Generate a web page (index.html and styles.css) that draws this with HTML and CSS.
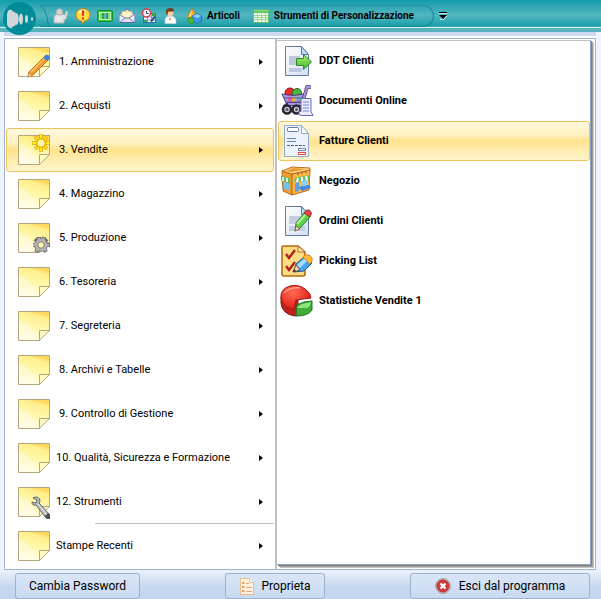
FILE: index.html
```html
<!DOCTYPE html>
<html lang="it">
<head>
  <meta charset="UTF-8" />
  <meta name="viewport" content="width=device-width, initial-scale=1.0"/>
  <title>Menu Vendite</title>
  <link rel="stylesheet" href="styles.css">
</head>
<body>

<!-- Shared gradients and the note icon -->
<svg class="defs" aria-hidden="true">
  <defs>
    <linearGradient id="paper" x1="0.2" y1="1" x2="0.5" y2="0">
      <stop offset="0" stop-color="#fffde2"/>
      <stop offset="0.65" stop-color="#fff5a0"/>
      <stop offset="0.9" stop-color="#ffef8c"/>
      <stop offset="1" stop-color="#ffd75c"/>
    </linearGradient>
    <linearGradient id="sheet" x1="0" y1="0" x2="1" y2="1">
      <stop offset="0" stop-color="#ffffff"/>
      <stop offset="1" stop-color="#d3def4"/>
    </linearGradient>
    <linearGradient id="green" x1="0" y1="0" x2="0" y2="1">
      <stop offset="0" stop-color="#b4f56a"/>
      <stop offset="1" stop-color="#35b52a"/>
    </linearGradient>
    <radialGradient id="red" cx="0.4" cy="0.3" r="0.7">
      <stop offset="0" stop-color="#ff6a52"/>
      <stop offset="1" stop-color="#dd1a14"/>
    </radialGradient>
    <symbol id="note" viewBox="0 0 32 30">
      <path d="M.5.5h31v19l-10 10H.5z" fill="url(#paper)" stroke="#b5a67c"/>
      <path d="M1 8Q14 14 20 29H1z" fill="#fff" opacity=".35"/>
      <path d="M21.500 29.500v-10h10z" fill="#fffbc4" stroke="#b5a67c"/>
    </symbol>
  </defs>
</svg>

<header class="topbar">
  <button class="logo" aria-label="Menu principale">
    <svg width="33" height="33" viewBox="0 0 33 33">
      <circle cx="16.500" cy="16.500" r="16.500" fill="#008b98"/>
      <g fill="#d2d6d9">
        <path d="M4 12q1-5 4-4 2 0 2 2 2-1 3 2v10q-1 3-3 2-1 3-3 2-3-1-3-5z"/>
        <ellipse cx="13.500" cy="17" rx="2.200" ry="6"/>
        <ellipse cx="18" cy="17" rx="2" ry="5.500"/>
        <ellipse cx="23.500" cy="17" rx="1.500" ry="4"/>
        <ellipse cx="29" cy="17" rx="1" ry="2"/>
      </g>
    </svg>
  </button>

  <div class="quickbar">
    <svg class="quickbar-edge" width="9" height="22" viewBox="0 0 9 22"><path d="M0 .5Q7 4 8.500 22" fill="none" stroke="#128c98"/></svg>
    <button class="tool" aria-label="Utente non attivo">
      <svg width="16" height="16" viewBox="0 0 16 16">
        <path d="M1 15V9q1-3 4-3h4l3 1 1-4 2 1-2 7-2 1v3z" fill="#e2e2e2" stroke="#b4b4b4"/>
        <circle cx="6.500" cy="4" r="3.200" fill="#d4d4d4" stroke="#b0b0b0"/>
        <path d="M4 9l2 3 3-3" fill="none" stroke="#f8f8f8"/>
      </svg>
    </button>
    <button class="tool" aria-label="Avvisi">
      <svg width="16" height="16" viewBox="0 0 16 16">
        <path d="M8 .8c4 0 7 2.500 7 6s-3 6-5 6L7 15.500 6.500 13C3 12.500 1 10 1 7c0-3.500 3-6.200 7-6.200z" fill="#ffdb48" stroke="#d67b08"/>
        <path d="M4 3q4-3 8 0-4 0-8 3z" fill="#fff8c0"/>
        <path d="M6.800 2.500h2.400L8.700 8H7.300zM7 9.500h2v2H7z" fill="#d42a12"/>
      </svg>
    </button>
    <button class="tool" aria-label="Pausa">
      <svg width="16" height="16" viewBox="0 0 16 16">
        <rect x=".5" y="2.500" width="15" height="11" rx="1" fill="#35c43c" stroke="#129225"/>
        <rect x="2.500" y="4.500" width="11" height="7" fill="#77e36d" stroke="#c5f7b8"/>
        <path d="M5.500 5.500h1.500v5H5.500zM9 5.500h1.500v5H9z" fill="#3b9ed8" stroke="#167d59" stroke-width=".6"/>
      </svg>
    </button>
    <button class="tool" aria-label="Posta">
      <svg width="16" height="16" viewBox="0 0 16 16">
        <path d="M.5 6L8 1l7.500 5v8.500H.5z" fill="#dbe1fa" stroke="#62679f"/>
        <path d="M3 3.500h10V9l-5 2-5-2z" fill="#fff3bf" stroke="#e1c988" stroke-width=".6"/>
        <path d="M.5 6.500L6 10l-5.500 4.500M15.500 6.500L10 10l5.500 4.500M6 10h4" fill="#eef1ff" stroke="#62679f" stroke-width=".8"/>
      </svg>
    </button>
    <button class="tool" aria-label="Agenda">
      <svg width="16" height="16" viewBox="0 0 16 16">
        <rect x="2.500" y="5.500" width="12" height="9" fill="#fff" stroke="#3767b5"/>
        <path d="M3 9h11M3 12h11M6.500 6v8M10.500 6v8" stroke="#7199d2"/>
        <path d="M11 5h3v3h-3zM3 12h3v2H3z" fill="#3ba84a"/>
        <circle cx="5.500" cy="5" r="4" fill="#f5f8ff" stroke="#d83a45" stroke-width="1.500"/>
        <path d="M5.500 3v2.500h2" fill="none" stroke="#345"/>
        <path d="M9 13l4-5 2 1-4 5z" fill="#385083"/>
      </svg>
    </button>
    <button class="tool" aria-label="Clienti">
      <svg width="16" height="16" viewBox="0 0 16 16">
        <path d="M2 15.500V11q1-3 5-3 5 0 6 4v3.500z" fill="#fff" stroke="#c5ccd2" stroke-width=".6"/>
        <circle cx="7" cy="5" r="3.300" fill="#fbd0a2"/>
        <path d="M3 6V3q1-3 4-3 4 0 4 3-3 1-6 .5L4.500 7z" fill="#703c1c"/>
        <path d="M7 8.500l-.7 3 .7 1 .7-1z" fill="#dc5636"/>
      </svg>
    </button>
    <button class="tool tool-wide">
      <svg width="16" height="16" viewBox="0 0 16 16">
        <path d="M6 .5L1 9q5 3 10 0z" fill="#ffac27" stroke="#c97512" stroke-width=".7"/>
        <path d="M5.500 2L3 8l2 1z" fill="#ffe28b"/>
        <path d="M6 8l5-2.500L15.500 8v5L11 15.500 6 13z" fill="#399ae9" stroke="#1660af" stroke-width=".7"/>
        <path d="M6.500 8l4.500-2 4 2-4 2z" fill="#94d0ff"/>
        <path d="M2 12q0-3 3-2.500T8 13t-3 2.500T2 12z" fill="#50bd2f" stroke="#28831b" stroke-width=".6"/>
      </svg>
      <span>Articoli</span>
    </button>
    <button class="tool tool-wide">
      <svg width="16" height="16" viewBox="0 0 16 16">
        <rect x=".5" y="2" width="15" height="12.500" fill="#effbe8" stroke="#65bd6c"/>
        <path d="M1 2.500h14v2.500H1z" fill="#62cd59"/>
        <path d="M1 7.500h14M1 9.500h14M1 11.500h14M4.500 5v9M8.500 5v9M12.500 5v9" stroke="#8dce88" stroke-width=".8"/>
      </svg>
      <span>Strumenti di Personalizzazione</span>
    </button>
  </div>
  <button class="tool overflow" aria-label="Personalizza barra">
    <svg width="8" height="8" viewBox="0 0 8 8"><path d="M1 7l3 1 4-4" fill="none" stroke="#d4f0f2"/><path d="M0 0h8v1H0zM0 3h8L4 7z" fill="#000"/><path d="M0 1.500h8" stroke="#bfe6e9"/></svg>
  </button>
</header>

<main class="panel">
  <nav class="menu" aria-label="Menu">
    <button class="menu-item">
      <svg class="note" viewBox="0 0 32 34"><use href="#note" width="32" height="30" y="2"/><path d="M28 10l4 3-17 17-5 2 1-5z" fill="#f49b32" stroke="#bd711d"/><path d="M13 27L28 12" stroke="#ffc568" stroke-width="1.500"/><path d="M10 32l1-4 3 3z" fill="#ffe3a0" stroke="#a5762c" stroke-width=".6"/><circle cx="29" cy="12.500" r="2.800" fill="#3b82da"/></svg>
      <span>1. Amministrazione</span>
    </button>
    <button class="menu-item">
      <svg class="note" viewBox="0 0 32 34"><use href="#note" width="32" height="30" y="2"/></svg>
      <span>2. Acquisti</span>
    </button>
    <button class="menu-item selected">
      <svg class="note" viewBox="0 0 32 34"><use href="#note" width="32" height="30" y="2"/><g transform="translate(23 10)"><circle r="4.500" fill="#fff6ab" stroke="#eeb600" stroke-width="2"/><path d="M0-9v4M0 5v4M-9 0h4M5 0h4M-6-6l2.500 2.500M6-6L3.500-3.500M-6 6l2.500-2.500M6 6L3.500 3.500" stroke="#dfa600" stroke-width="3.500"/><path d="M0-8.500v3.500M0 5v3.500M-8.500 0H-5M5 0h3.500M-5.600-5.600l2 2M5.600-5.600l-2 2M-5.600 5.600l2-2M5.600 5.600l-2-2" stroke="#ffed1d" stroke-width="2"/></g></svg>
      <span>3. Vendite</span>
    </button>
    <button class="menu-item">
      <svg class="note" viewBox="0 0 32 34"><use href="#note" width="32" height="30" y="2"/></svg>
      <span>4. Magazzino</span>
    </button>
    <button class="menu-item">
      <svg class="note" viewBox="0 0 32 34"><use href="#note" width="32" height="30" y="2"/><g transform="translate(23 24)"><path d="M-2-8l0 3M3-8l-1 4M-8 0h3M5 0h4M-6-6l3 3M6-6L3-3M-5 7l2-4M5 7L3 3" stroke="#6f6f6f" stroke-width="4"/><circle r="4.800" fill="none" stroke="#777" stroke-width="4"/><path d="M-2-7v3M3-7L2-4M-8 0h3M5 0h3M-5 6l2-3M5 6L3 3" stroke="#b2b2b2" stroke-width="2.500"/><circle r="4.700" fill="none" stroke="#b4b4b4" stroke-width="2.500"/><circle r="3" fill="#fff5aa" stroke="#858585" stroke-width=".7"/></g></svg>
      <span>5. Produzione</span>
    </button>
    <button class="menu-item">
      <svg class="note" viewBox="0 0 32 34"><use href="#note" width="32" height="30" y="2"/></svg>
      <span>6. Tesoreria</span>
    </button>
    <button class="menu-item">
      <svg class="note" viewBox="0 0 32 34"><use href="#note" width="32" height="30" y="2"/></svg>
      <span>7. Segreteria</span>
    </button>
    <button class="menu-item">
      <svg class="note" viewBox="0 0 32 34"><use href="#note" width="32" height="30" y="2"/></svg>
      <span>8. Archivi e Tabelle</span>
    </button>
    <button class="menu-item">
      <svg class="note" viewBox="0 0 32 34"><use href="#note" width="32" height="30" y="2"/></svg>
      <span>9. Controllo di Gestione</span>
    </button>
    <button class="menu-item tight">
      <svg class="note" viewBox="0 0 32 34"><use href="#note" width="32" height="30" y="2"/></svg>
      <span>10. Qualità, Sicurezza e Formazione</span>
    </button>
    <button class="menu-item tight">
      <svg class="note" viewBox="0 0 32 34"><use href="#note" width="32" height="30" y="2"/><path d="M15 13q5-3 7 2 0 2-1 3l11 12v3h-4L18 20q-4 1-4-3l4 1 1-3z" fill="#b8babc" stroke="#65686a"/><path d="M20 19l9 11" stroke="#eee"/><path d="M27 31l3-3 2 2v4h-3z" fill="#4c5052"/></svg>
      <span>12. Strumenti</span>
    </button>
    <hr class="menu-line">
    <button class="menu-item tight">
      <svg class="note" viewBox="0 0 32 34"><use href="#note" width="32" height="30" y="2"/></svg>
      <span>Stampe Recenti</span>
    </button>
  </nav>

  <div class="submenu-wrap">
    <nav class="submenu" aria-label="Vendite">
      <button class="sub-item">
        <svg width="34" height="32" viewBox="0 0 34 32">
          <path d="M5.500 1.500h16l7 8v21h-23z" fill="url(#sheet)" stroke="#6478a6"/>
          <path d="M21.500 1.500v8h7z" fill="#b5dcf4" stroke="#6478a6"/>
          <path d="M9 11h11v9H9zM9 23h13v4H9z" fill="#bfc9de"/>
          <path d="M16.500 13.500h7v-4l8 7.500-8 7.500v-4h-7z" fill="url(#green)" stroke="#2d8c25"/>
        </svg>
        <span>DDT Clienti</span>
      </button>
      <button class="sub-item">
        <svg width="34" height="32" viewBox="0 0 34 32">
          <circle cx="10" cy="8" r="5" fill="#e92c28" stroke="#8d1518"/><circle cx="17" cy="8" r="4.500" fill="#4cb844" stroke="#216f22"/>
          <path d="M2 9q11 3 22 0l-3 11H7z" fill="#a99ae6" stroke="#4e387b"/>
          <path d="M8 12h4v4H8z" fill="#e956ab"/><path d="M12 12h4v5h-4z" fill="#e9b642"/><path d="M17 12h4v4h-4z" fill="#5cc0a0"/>
          <path d="M4 13h18M6 17h15" stroke="#6a55a8"/>
          <path d="M31 2h-4l-5 17H8l-4 3" fill="none" stroke="#443568" stroke-width="3.500"/><path d="M31 2h-4l-5 17H8" fill="none" stroke="#ad94df" stroke-width="2"/>
          <circle cx="7" cy="24.500" r="4" fill="#ccc" stroke="#252535" stroke-width="2.500"/><circle cx="16.500" cy="24.500" r="4" fill="#ccc" stroke="#252535" stroke-width="2.500"/><circle cx="7" cy="24.500" r="1.500" fill="#556"/><circle cx="16.500" cy="24.500" r="1.500" fill="#556"/>
          <path d="M21 13.500h10v13l2 4H21q-3 0-2-4h2z" fill="#e8ebff" stroke="#6569b8"/>
          <path d="M23 17h6M23 20h6M23 23h6M23 26h6" stroke="#7c83d8"/>
        </svg>
        <span>Documenti Online</span>
      </button>
      <button class="sub-item selected">
        <svg width="34" height="32" viewBox="0 0 34 32">
          <path d="M4.500.5h17l7 8v23h-24z" fill="#edf3fc" stroke="#98aac7"/>
          <path d="M21.500.5v8h7z" fill="#fff" stroke="#98aac7"/>
          <rect x="7.500" y="2.500" width="11" height="4" rx="1" fill="#fff" stroke="#5f79a9"/>
          <path d="M7 13.500h9M7 16.500h9" stroke="#6d85b1"/>
          <path d="M7 20.500h18" stroke="#475f90" stroke-dasharray="3 1"/>
          <rect x="18.500" y="23.500" width="7" height="2" fill="#fff" stroke="#7486ae"/><rect x="18.500" y="27.500" width="7" height="2" fill="#fff" stroke="#e64a3c"/>
        </svg>
        <span>Fatture Clienti</span>
      </button>
      <button class="sub-item">
        <svg width="34" height="32" viewBox="0 0 34 32">
          <path d="M2 6l10 3v21L3 26z" fill="#f19b32" stroke="#b66c19"/>
          <path d="M12 9l18-4-1 20-17 5z" fill="#ffb83f" stroke="#b66c19"/>
          <path d="M2 6l10-4 18 1v2L12 9z" fill="#ffd88a" stroke="#b66c19"/>
          <path d="M6 6l7-3 13 1-14 3z" fill="#e99a33"/>
          <path d="M4 17l6 2v7l-6-2z" fill="#6fc4ee"/><path d="M15 18l4-1v9l-4 1z" fill="#5fa1e8"/><path d="M21 15h7v6l-7 2z" fill="#8ad3f6"/>
          <path d="M1 11l9 2v5q-2 2-3-1-2 2-3-1-3 1-3-1z" fill="#60bd6a"/><path d="M3 12v4M7 13v4" stroke="#fff" stroke-width="1.500"/>
          <path d="M15 13l13-3 2 4q-2 3-4 0-2 3-4 1-2 3-4 1-3 2-4 0z" fill="#62c36d"/><path d="M18 13l-1 4M22 12v4M26 11l1 4" stroke="#fff" stroke-width="2"/>
          <path d="M18 22l11-2 2 3-9 3z" fill="#4689dd"/>
          <path d="M17 9h2M21 8h2M25 7h2" stroke="#c8703a" stroke-width="2"/>
        </svg>
        <span>Negozio</span>
      </button>
      <button class="sub-item">
        <svg width="34" height="32" viewBox="0 0 34 32">
          <path d="M5.500 1.500h16l7 8v21h-23z" fill="url(#sheet)" stroke="#6478a6"/>
          <path d="M21.500 1.500v8h7z" fill="#b5dcf4" stroke="#6478a6"/>
          <path d="M9 11h11v8H9zM9 21h7v5H9zM18 21h7v5h-7z" fill="#c4cde0"/>
          <path d="M25 7l5 5-10 11-5 3 1-8z" fill="#5fd04b" stroke="#287d27"/>
          <path d="M17 19l9-10" stroke="#b5f58f" stroke-width="2"/>
          <path d="M24 8q2-4 5-3 4 2 1 7z" fill="#e34b4a" stroke="#9c282b"/>
          <path d="M15 26l1-5 4 3z" fill="#f3dab1" stroke="#6d573b" stroke-width=".7"/>
        </svg>
        <span>Ordini Clienti</span>
      </button>
      <button class="sub-item">
        <svg width="34" height="32" viewBox="0 0 34 32">
          <path d="M3 1h15l7 6v22q0 2-2 2H4q-2 0-2-2V2q0-1 1-1z" fill="#ffdc83" stroke="#b66b10" stroke-width="1.600"/>
          <path d="M18 1v6h7z" fill="#fff0c0" stroke="#b66b10"/>
          <path d="M6 9l3 4 6-8M6 21l3 4 6-8" fill="none" stroke="#af211c" stroke-width="2.400"/>
          <path d="M14 27l2-8 8-7 8 6-8 8z" fill="#4aa5ee" stroke="#195991"/>
          <path d="M17 20l8-7 3 2-8 8z" fill="#a7dcff"/>
          <path d="M23 12q2-3 5-2 5 1 4 6l-2 3z" fill="#ffbd3e" stroke="#d28325"/>
          <path d="M13 27l3-7 4 5z" fill="#ffe0a0" stroke="#705239"/><path d="M13 27l1-3 2 2z" fill="#272727"/>
        </svg>
        <span>Picking List</span>
      </button>
      <button class="sub-item">
        <svg width="34" height="32" viewBox="0 0 34 32">
          <path d="M1 12v6q1 11 14 13l3-1V14z" fill="#c0221c" stroke="#801010"/>
          <path d="M16 15l-2 10Q3 23 1 13 0 4 10 1q9-2 15 3 6 4 6 9z" fill="url(#red)" stroke="#9d1714"/>
          <path d="M4 8q6-6 16-5" fill="none" stroke="#ff9c84" stroke-width="1.500"/>
          <path d="M16 31l1-11q6-4 15-4v9q-4 6-16 6z" fill="#44aa38" stroke="#187621"/>
          <path d="M17 23q1-4 14-6-1 6-5 6z" fill="#8ae57c"/>
        </svg>
        <span>Statistiche Vendite 1</span>
      </button>
    </nav>
  </div>
</main>

<footer class="bottombar">
  <button class="foot-btn">Cambia Password</button>
  <button class="foot-btn small">
    <svg width="14" height="17" viewBox="0 0 14 17"><path d="M.5.500h9l4 4v12H.5z" fill="#fff3df" stroke="#e8bd91"/><path d="M9.500.500v4h4" fill="#fff" stroke="#e8bd91"/><path d="M2 4h2.500v2H2zM2 8h2.500v2H2zM2 12h2.500v2H2z" fill="#e1a069"/><path d="M6 5.500h3M6 9.500h6M6 13.500h6" stroke="#dfa775"/></svg>
    Proprieta
  </button>
  <button class="foot-btn large">
    <svg width="16" height="16" viewBox="0 0 16 16"><circle cx="8" cy="8" r="7.500" fill="#d8d3d5" stroke="#aaa5a9"/><circle cx="8" cy="8" r="6.200" fill="#cf3940" stroke="#b9222b" stroke-width=".7"/><path d="M5.500 5.500l5 5M10.500 5.500l-5 5" stroke="#fff" stroke-width="2.200"/></svg>
    Esci dal programma
  </button>
</footer>

</body>
</html>
```

FILE: styles.css
```css
* {
  box-sizing: border-box;
  margin: 0;
  padding: 0;
}

body {
  font-family: Roboto, 'Open Sans', sans-serif;
  font-size: 11px;
  line-height: 16px;
  color: #000;
  background: #edf4fd;
  display: flex;
  flex-direction: column;
  min-height: 100vh;
}

button {
  font: inherit;
  color: inherit;
  background: none;
  border: none;
  cursor: pointer;
  white-space: nowrap;
}

svg {
  display: block;
  flex: none;
}

.defs {
  position: absolute;
  width: 0;
  height: 0;
}

/* Top toolbar */
.topbar {
  position: relative;
  display: flex;
  height: 32px;
  padding: 5px 0 5px 40px;
  background:
    linear-gradient(#3ba9b2 0 1px, #d5f3f3 1px 2px, #57b4bc 2px) 0 26px / 100% 6px no-repeat,
    linear-gradient(#139daa, #53b6c0 15px, #1b9fab 26px);
}

.logo {
  position: absolute;
  left: 3px;
  top: 2px;
}

.quickbar {
  position: relative;
  display: flex;
  align-items: center;
  gap: 6px;
  padding: 0 19px 0 13px;
  border-top: 1px solid #1c95a1;
  border-right: 1px solid #128c98;
  border-bottom: 1px solid #128c98;
  border-radius: 0 12px 12px 0;
}

.quickbar-edge {
  position: absolute;
  left: 0;
  top: -1px;
}

.tool {
  display: flex;
  align-items: center;
}

.tool-wide {
  gap: 5px;
  margin-left: 1px;
  font-size: 10px;
  font-weight: 700;
}

.tool-wide + .tool-wide {
  margin-left: 7px;
}

.overflow {
  margin-left: 5px;
}

/* Main panel */
.panel {
  flex: 1;
  display: flex;
  margin: 6px 5px 0 4px;
  background: #fff;
  border: 1px solid #9fb2d1;
  box-shadow: 0 -2px #fff, 0 -6px #c9daf1;
}

.menu {
  flex: 0 1 272px;
  padding: 1px;
  border-right: 2px solid #c0c0c0;
}

.menu-item {
  display: flex;
  align-items: center;
  gap: 9px;
  width: 100%;
  height: 44px;
  padding: 0 10px 0 11px;
  border: 1px solid transparent;
  border-radius: 3px;
}

.menu-item.tight {
  gap: 6px;
}

.menu-item::after {
  content: "";
  margin-left: auto;
  border: 3px solid transparent;
  border-left: 4px solid #000;
  border-right-width: 0;
}

.note {
  width: 32px;
  height: 34px;
}

.menu-item.selected,
.sub-item.selected {
  border-color: #edc45c;
  background: linear-gradient(#fff8dd, #fff0bd 35%, #ffe28c 50%, #ffebaa 70%, #fff5cc);
}

.menu-line {
  height: 1px;
  margin: -1px 0 0 89px;
  border: none;
  background: #c0c0c0;
}

.submenu-wrap {
  flex: 1;
  display: flex;
  padding: 1px 4px 4px 0;
}

.submenu {
  flex: 1;
  padding: 0 0 0 1px;
  border-top: 1px solid #c0c0c0;
  border-right: 1px solid #8fa5c4;
  border-bottom: 1px solid #8fa5c4;
  box-shadow: 1px 1px #808080, 2px 2px #a0a0a0, 3px 3px #c6c6c6;
}

.sub-item {
  display: flex;
  align-items: center;
  gap: 5px;
  width: 100%;
  height: 40px;
  padding: 0 1px;
  border: 1px solid transparent;
  border-radius: 3px;
  font-weight: 700;
}

/* Bottom buttons */
.bottombar {
  display: flex;
  justify-content: space-between;
  height: 29px;
  padding: 3px 11px 0 15px;
  background: linear-gradient(#eaf2fc, #c5d7ee 60%);
}

.foot-btn {
  display: flex;
  align-items: center;
  justify-content: center;
  gap: 8px;
  width: 125px;
  height: 26px;
  font-size: 12px;
  border: 1px solid #9eb2ce;
  border-radius: 3px;
  background: linear-gradient(#d9e6f7, #c9daf0);
}

.foot-btn.small {
  width: 100px;
}

.foot-btn.large {
  width: 180px;
}
```
